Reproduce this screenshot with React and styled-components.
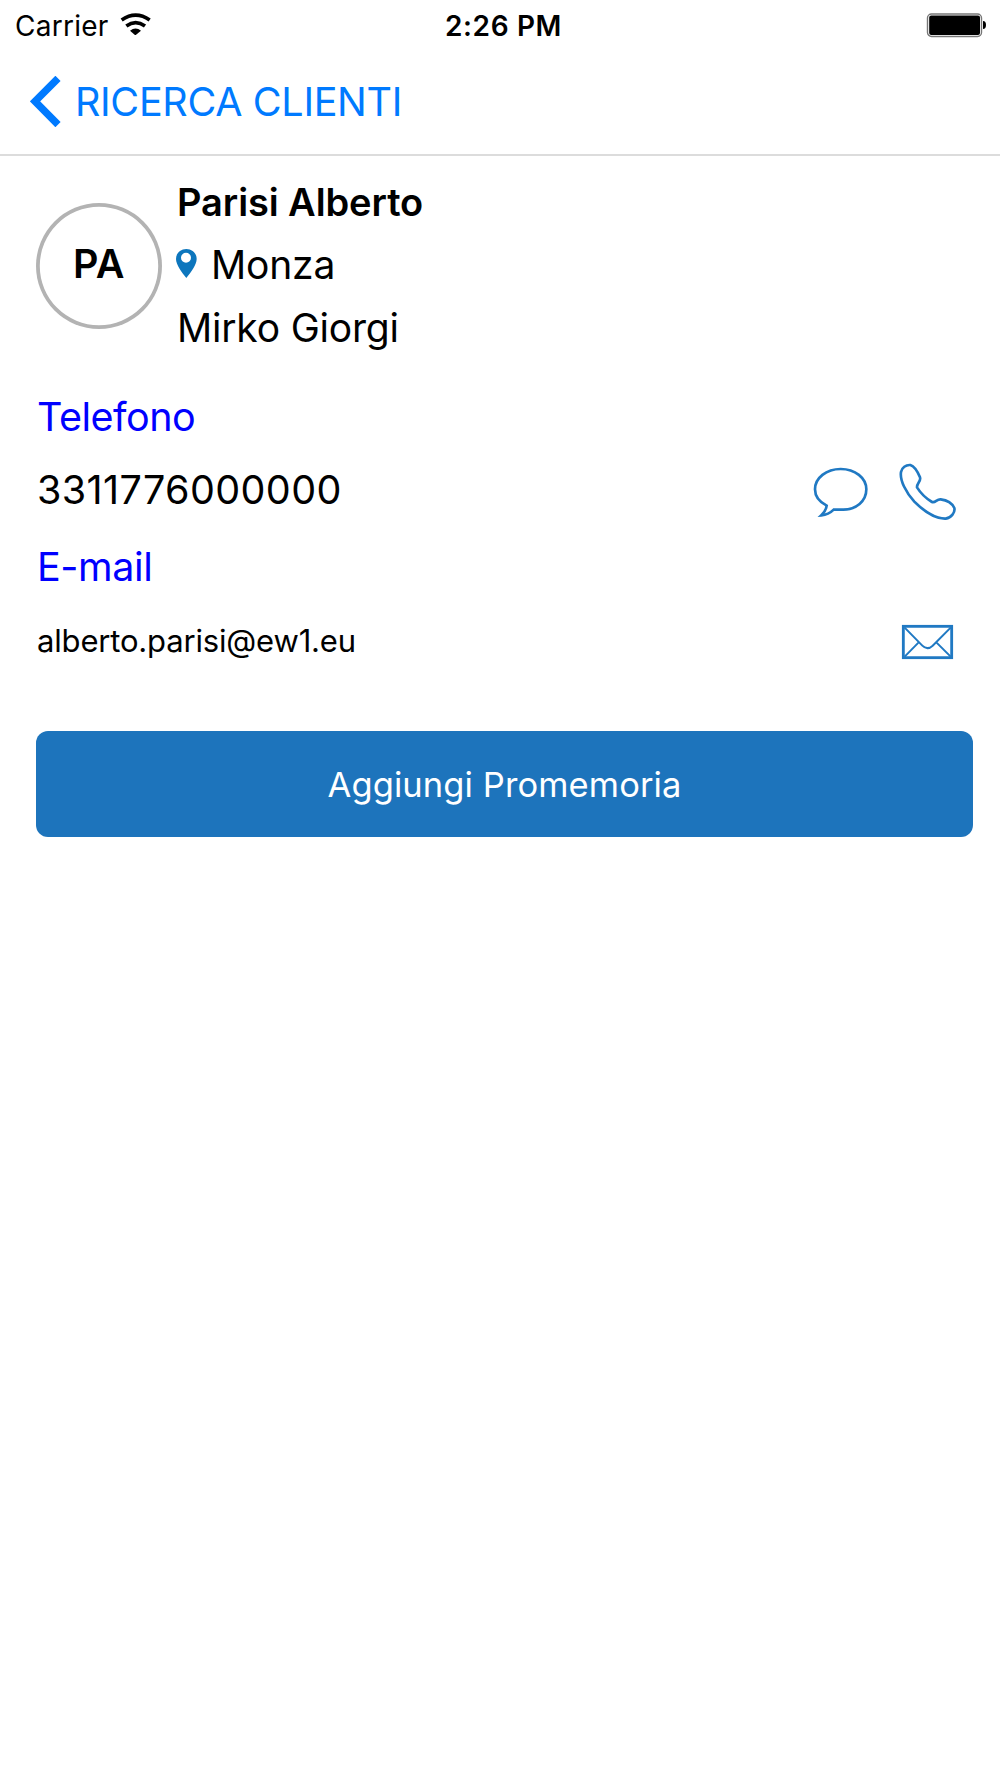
import React from "react";
import styled, { createGlobalStyle } from "styled-components";

const GlobalStyle = createGlobalStyle`
  body {
    margin: 0;
    background: #fff;
    color: #000;
    font-family: Inter, "Liberation Sans", sans-serif;
  }
`;

const Screen = styled.div`
  min-height: 1778px;
  background: #fff;
`;

const StatusBar = styled.div`
  display: grid;
  grid-template-columns: 1fr auto 1fr;
  align-items: center;
  height: 51px;
  padding: 1px 14px 0 15px;
  font-size: 28px;
  line-height: 51px;
`;

const Carrier = styled.div`
  display: flex;
  align-items: center;
  gap: 11px;
  letter-spacing: 0.25px;

  svg {
    margin-top: -5px;
  }
`;

const Time = styled.div`
  font-weight: 600;
  padding-left: 6px;
  letter-spacing: 0.65px;
`;

const Battery = styled.svg`
  justify-self: end;
  margin-top: -3px;
`;

const NavBar = styled.div`
  display: flex;
  align-items: center;
  height: 102px;
  padding-left: 30px;
  border-bottom: 2px solid #dcdcdc;
  color: #007aff;

  svg {
    margin-top: -3px;
  }
`;

const BackLabel = styled.span`
  margin: -3px 0 0 14px;
  font-size: 39.5px;
  line-height: 60px;
  letter-spacing: -0.33px;
`;

const Profile = styled.div`
  display: flex;
  align-items: center;
  height: 191px;
  padding: 14px 0 0 36px;
`;

const Avatar = styled.div`
  box-sizing: border-box;
  display: flex;
  align-items: center;
  justify-content: center;
  width: 126px;
  height: 126px;
  padding-bottom: 3px;
  box-shadow: inset 0 0 0 3.8px #b3b3b3;
  border-radius: 50%;
  font-size: 39.5px;
  font-weight: 600;
  letter-spacing: 0.5px;
`;

const Details = styled.div`
  margin: -2px 0 0 14px;
`;

const Detail = styled.div`
  display: flex;
  align-items: center;
  height: 63px;
  font-size: ${(props) => (props.$bold ? "38px" : "39px")};
  font-weight: ${(props) => (props.$bold ? 600 : 400)};
  letter-spacing: ${(props) => props.$spacing || "-0.2px"};

  svg {
    margin-top: -3px;
  }
`;

const Name = styled.span`
  margin-left: 1px;
`;

const City = styled.span`
  margin-left: 14px;
`;

const Contacts = styled.div`
  padding: 19px 42px 0 37px;
`;

const Row = styled.div`
  display: flex;
  align-items: center;
  justify-content: space-between;
  height: ${(props) => props.$height};
  color: ${(props) => (props.$label ? "#0000ff" : "#000")};
  font-size: ${(props) => props.$size || "39.5px"};
  letter-spacing: ${(props) => props.$spacing || "0"};
`;

const Email = styled.span`
  padding-bottom: 1px;
`;

const Actions = styled.div`
  display: flex;
  align-items: center;
  gap: 28px;
  padding-top: ${(props) => props.$offset};
  padding-right: ${(props) => props.$inset || "0"};
`;

const Button = styled.button`
  display: block;
  width: 937px;
  height: 106px;
  margin: 56px 0 0 36px;
  padding: 0;
  border: none;
  border-radius: 12px;
  background: #1d74bc;
  color: #fff;
  font-family: inherit;
  font-size: 34.5px;
  letter-spacing: 0.1px;
`;

const WifiIcon = () => (
  <svg width="31" height="22" viewBox="361 37 93 66">
    <path d="M366 58 Q408 29 450 58" fill="none" stroke="#000" strokeWidth="11" />
    <path d="M380 76 Q408 56 436 76" fill="none" stroke="#000" strokeWidth="11" />
    <path d="M391 90 Q408 77 424 90 L407 104 Z" fill="#000" />
  </svg>
);

const BackIcon = () => (
  <svg width="31" height="51" viewBox="90 229 93 153">
    <path d="M174 236 L105 305 L174 375" fill="none" stroke="#007aff" strokeWidth="22" />
  </svg>
);

const PinIcon = () => (
  <svg width="21" height="29" viewBox="0 0 63 87">
    <path
      fillRule="evenodd"
      fill="#0d76bd"
      d="M31 0 C49 0 62 13 62 30 C62 47 45 70 31 87 C17 70 0 47 0 30 C0 13 13 0 31 0 Z M30 11 A15 15 0 1 0 30 41 A15 15 0 1 0 30 11 Z"
    />
  </svg>
);

const MessageIcon = () => (
  <svg width="58" height="54" viewBox="36 45 174 162">
    <path
      d="M80 167 C58 156 45 138 45 118 C45 84 79 57 122 57 C165 57 199 84 199 118 C199 154 168 179 130 179 L101 179 C91 189 79 195 64 196 C73 188 78 180 80 167 Z"
      fill="none"
      stroke="#2079c3"
      strokeWidth="8"
    />
  </svg>
);

const PhoneIcon = () => (
  <svg width="60" height="60" viewBox="294 36 180 180">
    <path
      d="M303 66 C305 53 318 44 331 45 C344 49 353 65 360 82 C364 93 350 100 351 112 C361 128 378 145 396 156 C406 160 410 147 422 148 C440 150 456 159 463 174 C466 187 454 203 437 206 C410 207 374 186 343 155 C318 127 299 91 303 66 Z"
      fill="none"
      stroke="#2079c3"
      strokeWidth="8"
      strokeLinejoin="round"
    />
  </svg>
);

const MailIcon = () => (
  <svg width="55" height="38" viewBox="60 39 165 114">
    <g fill="none" stroke="#2079c3">
      <rect x="70" y="49" width="145" height="94" strokeWidth="8.5" />
      <path
        d="M74 53 L127 107 Q142 122 158 107 L212 53 M74 140 L116 97 M212 140 L169 97"
        strokeWidth="6"
      />
    </g>
  </svg>
);

const App = () => {
  return (
    <Screen>
      <GlobalStyle />
      <StatusBar>
        <Carrier>
          Carrier
          <WifiIcon />
        </Carrier>
        <Time>2:26 PM</Time>
        <Battery width="60" height="25" viewBox="0 0 60 25">
          <rect x="1.5" y="1" width="54" height="22.5" rx="4" fill="#fff" stroke="#777" strokeWidth="1.4" />
          <rect x="3.2" y="2.5" width="50.8" height="19.5" rx="2" fill="#000" />
          <path d="M57 8 A3 4 0 0 1 57 16 Z" fill="#000" />
        </Battery>
      </StatusBar>
      <NavBar>
        <BackIcon />
        <BackLabel>RICERCA CLIENTI</BackLabel>
      </NavBar>
      <Profile>
        <Avatar>PA</Avatar>
        <Details>
          <Detail $bold $spacing="-0.1px">
            <Name>Parisi Alberto</Name>
          </Detail>
          <Detail>
            <PinIcon />
            <City>Monza</City>
          </Detail>
          <Detail>
            <Name>Mirko Giorgi</Name>
          </Detail>
        </Details>
      </Profile>
      <Contacts>
        <Row $label $height="73px" $spacing="-0.5px">
          Telefono
        </Row>
        <Row $height="73px" $spacing="0.38px">
          3311776000000
          <Actions $offset="4px">
            <MessageIcon />
            <PhoneIcon />
          </Actions>
        </Row>
        <Row $label $height="81px" $spacing="-0.4px">
          E-mail
        </Row>
        <Row $height="68px" $size="31px" $spacing="-0.17px">
          <Email>alberto.parisi@ew1.eu</Email>
          <Actions $offset="2px" $inset="3px">
            <MailIcon />
          </Actions>
        </Row>
      </Contacts>
      <Button>Aggiungi Promemoria</Button>
    </Screen>
  );
};

export default App;
